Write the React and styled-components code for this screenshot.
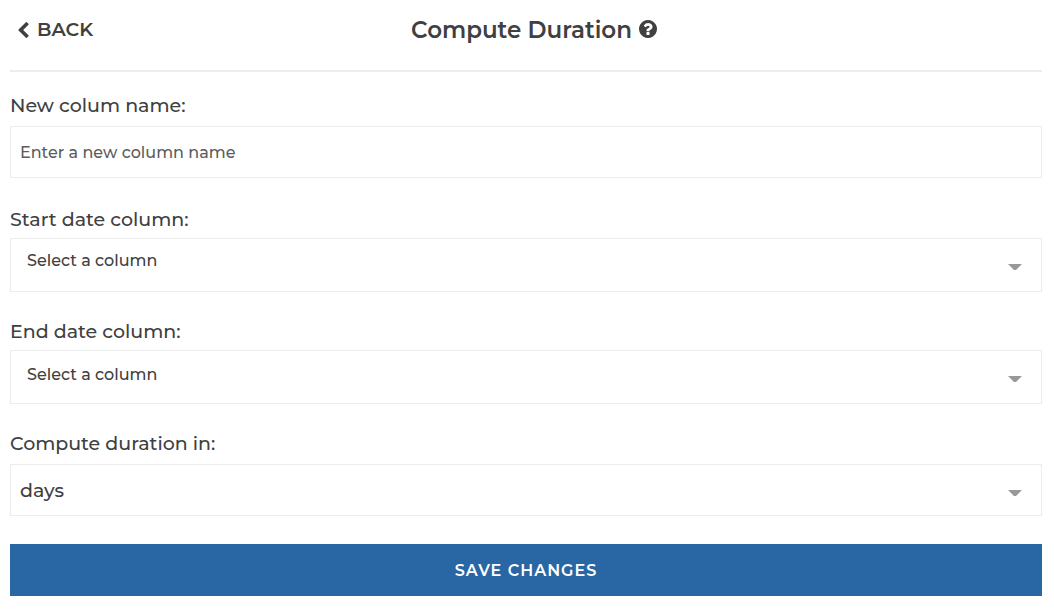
import React from "react";
import styled, { createGlobalStyle } from "styled-components";

const GlobalStyle = createGlobalStyle`
  * { box-sizing: border-box; }
  body {
    margin: 0;
    background: #fff;
    color: #404041;
    font-family: Montserrat, Inter, sans-serif;
    font-weight: 500;
  }
  button, input, select { font: inherit; color: inherit; }
`;

const Page = styled.main`
  padding: 0 12px 16px 10px;
`;

const Header = styled.header`
  display: grid;
  grid-template-columns: 104px 1fr 96px;
  align-items: center;
  height: 72px;
  padding: 0 0 10px 8px;
  border-bottom: 2px solid #ededed;
`;

const BackButton = styled.button`
  display: flex;
  align-items: center;
  gap: 8px;
  padding: 0;
  border: 0;
  background: none;
  font-size: 19px;
  font-weight: 600;
  line-height: 24px;
  cursor: pointer;

  svg { width: 11px; height: 16px; fill: currentColor; }
`;

const Title = styled.h1`
  display: flex;
  align-items: center;
  justify-content: center;
  gap: 7px;
  margin: 0;
  font-size: 23px;
  font-weight: 600;
  line-height: 28px;
  white-space: nowrap;
`;

const HelpButton = styled.button`
  display: flex;
  padding: 0 0 2px;
  border: 0;
  background: none;
  cursor: pointer;

  svg { width: 18px; height: 18px; fill: currentColor; }
`;

const Form = styled.form`
  display: flex;
  flex-direction: column;
  gap: 28px;
  padding-top: 22px;
`;

const Field = styled.div`
  display: flex;
  flex-direction: column;
  gap: ${({ $gap }) => $gap || 8}px;
  padding-bottom: ${({ $spaced }) => ($spaced ? 2 : 0)}px;
`;

const Label = styled.label`
  font-size: 19px;
  line-height: 24px;
`;

const TextInput = styled.input`
  width: 100%;
  height: 52px;
  padding: 0 9px;
  border: 1px solid #ececec;
  border-radius: 0;
  background: #fff;
  font-size: 16px;

  &::placeholder { color: #5c5c5d; opacity: 1; }
`;

const SelectBox = styled.div`
  position: relative;
`;

const Select = styled.select`
  display: block;
  width: 100%;
  height: ${({ $tall }) => ($tall ? 54 : 52)}px;
  padding: 0 40px ${({ $lift }) => $lift || 0}px ${({ $tall }) => ($tall ? 16 : 9)}px;
  border: 1px solid #ececec;
  border-radius: 0;
  background: #fff;
  font-size: ${({ $tall }) => ($tall ? 16 : 19)}px;
  appearance: none;
`;

const Caret = styled.svg`
  position: absolute;
  right: 20px;
  bottom: ${({ $tall }) => ($tall ? 22 : 20)}px;
  width: 14px;
  height: 6px;
  fill: #999;
  pointer-events: none;
`;

const SaveButton = styled.button`
  width: 100%;
  height: 52px;
  padding: 0;
  border: 0;
  background: #2866a4;
  color: #fff;
  font-size: 16px;
  font-weight: 600;
  letter-spacing: 1px;
  cursor: pointer;
`;

function ChevronLeftIcon() {
  return (
    <svg viewBox="154 26 1036 1612" aria-hidden="true">
      <path d="M1171 301l-531 531 531 531q19 19 19 45t-19 45l-166 166q-19 19-45 19t-45-19l-742-742q-19-19-19-45t19-45l742-742q19-19 45-19t45 19l166 166q19 19 19 45t-19 45z" />
    </svg>
  );
}

function QuestionCircleIcon() {
  return (
    <svg viewBox="128 128 1536 1536" aria-hidden="true">
      <path d="M1024 1376v-192q0-14-9-23t-23-9h-192q-14 0-23 9t-9 23v192q0 14 9 23t23 9h192q14 0 23-9t9-23zm256-672q0-88-55.5-163t-138.5-116-170-41q-243 0-371 213-15 24 8 42l132 100q7 6 19 6 16 0 25-12 53-68 86-92 34-24 86-24 48 0 85.500 26t37.500 59q0 38-20 61t-68 45q-63 28-115.500 86.500t-52.500 125.500v36q0 14 9 23t23 9h192q14 0 23-9t9-23q0-19 21.500-49.500t54.500-49.500q32-18 49-28.500t46-35 44.500-48 28-60.500 12.500-81zm384 192q0 209-103 385.500t-279.500 279.500-385.500 103-385.500-103-279.500-279.500-103-385.500 103-385.500 279.500-279.500 385.500-103 385.500 103 279.500 279.500 103 385.500z" />
    </svg>
  );
}

function SelectField({ id, label, options, tall, lift }) {
  return (
    <Field $gap={tall ? 6 : 8}>
      <Label htmlFor={id}>{label}</Label>
      <SelectBox>
        <Select id={id} $tall={tall} $lift={lift}>
          {options.map((option) => (
            <option key={option}>{option}</option>
          ))}
        </Select>
        <Caret $tall={tall} viewBox="0 0 14 6" aria-hidden="true">
          <path d="M0 0H14L8 6H6Z" />
        </Caret>
      </SelectBox>
    </Field>
  );
}

export default function App() {
  return (
    <>
      <GlobalStyle />
      <Page>
        <Header>
          <BackButton type="button">
            <ChevronLeftIcon />
            BACK
          </BackButton>
          <Title>
            Compute Duration
            <HelpButton type="button">
              <QuestionCircleIcon />
            </HelpButton>
          </Title>
        </Header>
        <Form>
          <Field $spaced>
            <Label htmlFor="name">New colum name:</Label>
            <TextInput id="name" placeholder="Enter a new column name" />
          </Field>
          <SelectField id="start" label="Start date column:" options={["Select a column"]} tall lift={10} />
          <SelectField id="end" label="End date column:" options={["Select a column"]} tall lift={6} />
          <SelectField id="unit" label="Compute duration in:" options={["days"]} />
          <SaveButton type="submit">SAVE CHANGES</SaveButton>
        </Form>
      </Page>
    </>
  );
}
